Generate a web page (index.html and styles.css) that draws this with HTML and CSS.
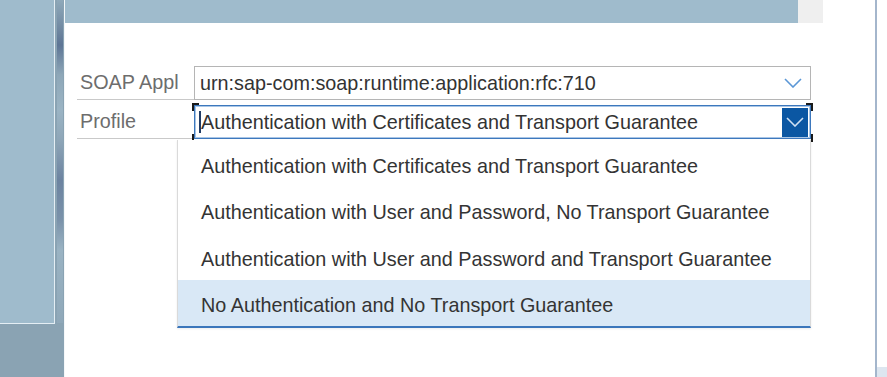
FILE: index.html
```html
<!DOCTYPE html>
<html>
<head>
<meta charset="utf-8">
<link rel="stylesheet" href="styles.css">
</head>
<body>
<div class="page">
  <div class="sidebar">
    <div class="sb-panel"></div>
    <div class="sb-strip"></div>
  </div>
  <div class="main">
    <div class="topbar">
      <div class="topbar-blue"></div>
      <div class="topbar-grey"></div>
    </div>
    <div class="form">
      <div class="label">SOAP Appl</div>
      <div class="input">
        <span class="value">urn:sap-com:soap:runtime:application:rfc:710</span>
        <svg class="chev" width="18" height="10" viewBox="0 0 18 10"><path d="M1 1 L9 9 L17 1" fill="none" stroke="#5b97d6" stroke-width="1.6"/></svg>
      </div>
      <div class="label">Profile</div>
      <div class="input focused">
        <span class="caret"></span>
        <span class="value">Authentication with Certificates and Transport Guarantee</span>
        <span class="btn"><svg width="18" height="10" viewBox="0 0 18 10"><path d="M1 1 L9 9 L17 1" fill="none" stroke="#cfe0f3" stroke-width="1.6"/></svg></span>
        <span class="corner tl"></span>
        <span class="corner bl"></span>
        <span class="corner tr"></span>
        <span class="corner br"></span>
      </div>
      <ul class="list">
        <li class="item">Authentication with Certificates and Transport Guarantee</li>
        <li class="item">Authentication with User and Password, No Transport Guarantee</li>
        <li class="item">Authentication with User and Password and Transport Guarantee</li>
        <li class="item selected">No Authentication and No Transport Guarantee</li>
      </ul>
    </div>
  </div>
  <div class="edge"></div>
  <div class="rightpad">
    <div class="rightpad-patch"></div>
  </div>
</div>
</body>
</html>
```

FILE: styles.css
```css
html, body {
  margin: 0;
  padding: 0;
  background: #ffffff;
}
body {
  font-family: "Liberation Sans", Arial, sans-serif;
}
.page {
  display: flex;
  width: 887px;
  height: 377px;
  overflow: hidden;
}
.sidebar {
  width: 64px;
  flex: none;
  display: flex;
  flex-direction: column;
  background: #8aa3b3;
  position: relative;
}
.sb-panel {
  width: 54px;
  height: 323px;
  background: #9fbbcc;
  border-right: 1px solid #e4eef4;
  border-bottom: 1px solid #e4eef4;
}
.sb-strip {
  position: absolute;
  left: 57px;
  top: 0;
  width: 6px;
  height: 323px;
  background: linear-gradient(#8fa9ba 0px, #6f87a0 30px, #5d7595 45px, #8ea7b8 75px, #9bb4c4 110px, #8ea6b8 140px, #6c83a0 180px, #7a92aa 220px, #9ab3c3 250px, #8fa8b9 323px);
}
.main {
  width: 811px;
  flex: none;
  display: flex;
  flex-direction: column;
  border-left: 1px solid #f4f7f9;
  box-sizing: border-box;
}
.topbar {
  display: flex;
  height: 23px;
  flex: none;
}
.topbar-blue {
  width: 733px;
  background: #9fbbcc;
}
.topbar-grey {
  width: 25px;
  background: #efefef;
}
.form {
  position: relative;
  margin-top: 43px;
  margin-left: 12px;
  display: grid;
  grid-template-columns: 117px 617px;
  grid-auto-rows: 34px;
  row-gap: 5px;
}
.label {
  box-sizing: border-box;
  border-bottom: 1px solid #c9c9c9;
  padding-left: 3px;
  display: flex;
  align-items: center;
  font-size: 19.8px;
  color: #6d6d6d;
  white-space: nowrap;
  overflow: hidden;
}
.input {
  position: relative;
  box-sizing: border-box;
  border: 1px solid #b5b5b5;
  display: flex;
  align-items: center;
  padding-left: 5px;
  font-size: 19.8px;
  color: #333333;
  white-space: nowrap;
}
.input .value {
  flex: 1;
}
.chev {
  margin-right: 8px;
}
.input.focused {
  border: 1px solid #3d78bd;
  box-shadow: inset 0 0 0 1px #a9c6e6;
  padding-left: 4px;
}
.caret {
  width: 2px;
  height: 22px;
  background: #203c66;
}
.btn {
  width: 26px;
  height: 29px;
  margin-right: 2px;
  background: #0b57a3;
  display: flex;
  align-items: center;
  justify-content: center;
}
.corner {
  position: absolute;
  width: 5px;
  height: 6px;
  border-color: #1a1a1a;
  border-style: solid;
  border-width: 0;
}
.corner.tl {
  left: -3px;
  top: -3px;
  border-left-width: 2px;
  border-top-width: 2px;
}
.corner.bl {
  left: -3px;
  bottom: -4px;
  border-left-width: 2px;
  border-bottom-width: 2px;
}
.corner.tr {
  right: -3px;
  top: -3px;
  border-right-width: 2px;
  border-top-width: 2px;
}
.corner.br {
  right: -3px;
  bottom: -4px;
  border-right-width: 2px;
  border-bottom-width: 2px;
}
.list {
  position: absolute;
  left: 100px;
  top: 74px;
  width: 634px;
  margin: 0;
  padding: 0;
  list-style: none;
  background: #ffffff;
  box-sizing: border-box;
  border-left: 1px solid #dadada;
  border-right: 1px solid #dadada;
  border-bottom: 2px solid #3b76bb;
  box-shadow: 0 1px 2px rgba(0,0,0,0.08);
}
.item {
  box-sizing: border-box;
  height: 46.5px;
  padding-top: 6px;
  display: flex;
  align-items: center;
  padding-left: 23px;
  font-size: 19.8px;
  color: #343434;
  white-space: nowrap;
}
.item.selected {
  background: #d9e8f6;
}
.edge {
  width: 2px;
  flex: none;
  background: #a4b6cc;
}
.rightpad {
  flex: 1;
  display: flex;
  flex-direction: column;
  justify-content: flex-end;
}
.rightpad-patch {
  height: 10px;
  background: #dde6f0;
}
```
